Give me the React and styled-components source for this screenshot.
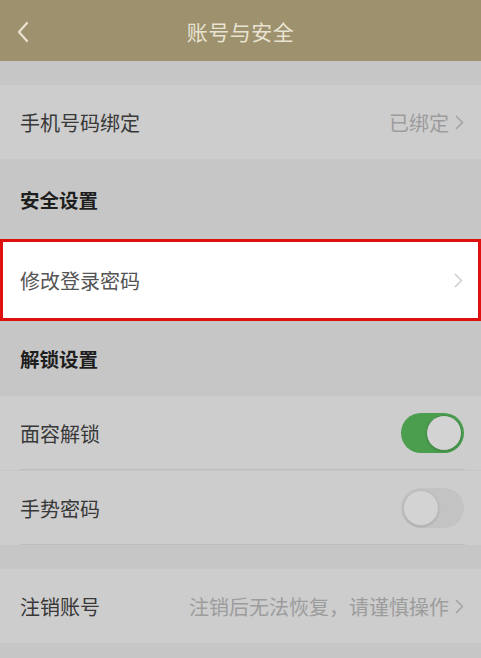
import styled, { createGlobalStyle } from "styled-components"

const GlobalStyle = createGlobalStyle`
    body {
        margin: 0;
        background: #c6c6c6;
        font-family: "Noto Sans CJK SC", "Noto Sans", sans-serif;
    }
`

function Chevron({ color = "#a8a8a8", size = 15 }) {
    return (
        <svg width={size * 0.6} height={size} viewBox="0 0 6 10">
            <path d="M1 1 L5 5 L1 9" fill="none" stroke={color} strokeWidth="1.1" strokeLinecap="round" strokeLinejoin="round" />
        </svg>
    )
}

function Toggle({ on }) {
    return (
        <Switch on={on}>
            <span />
        </Switch>
    )
}

export default function App() {
    return (
        <Page>
            <GlobalStyle />
            <Header>
                <BackButton>
                    <svg width="14" height="22" viewBox="0 0 14 22">
                        <path d="M11 2 L3 11 L11 20" fill="none" stroke="#e9e3d3" strokeWidth="2.2" strokeLinecap="round" strokeLinejoin="round" />
                    </svg>
                </BackButton>
                <Title>账号与安全</Title>
            </Header>

            <Spacer />
            <Row>
                <Label>手机号码绑定</Label>
                <Value>已绑定 <Chevron color="#a4a4a4" /></Value>
            </Row>

            <SectionTitle height={80}>安全设置</SectionTitle>
            <HighlightRow>
                <Label light>修改登录密码</Label>
                <Value><Chevron color="#cfcfcf" /></Value>
            </HighlightRow>

            <SectionTitle height={75}>解锁设置</SectionTitle>
            <Row divider>
                <Label>面容解锁</Label>
                <Toggle on />
            </Row>
            <Row divider>
                <Label>手势密码</Label>
                <Toggle />
            </Row>

            <Spacer />
            <Row>
                <Label>注销账号</Label>
                <Value>注销后无法恢复，请谨慎操作 <Chevron color="#a4a4a4" /></Value>
            </Row>
        </Page>
    )
}

const Page = styled.div`
    width: 481px;
    min-height: 658px;
    background: #c6c6c6;
    display: flex;
    flex-direction: column;
`
const Header = styled.div`
    height: 61px;
    background: #9e916d;
    display: flex;
    align-items: center;
    justify-content: center;
    position: relative;
`
const BackButton = styled.div`
    position: absolute;
    left: 16px;
    top: 21px;
    display: flex;
`
const Title = styled.div`
    font-size: 21px;
    color: #e9e3d3;
    letter-spacing: 0.5px;
`
const Spacer = styled.div`
    height: 24px;
`
const Row = styled.div`
    height: 74px;
    box-sizing: border-box;
    background: #cdcdcd;
    display: flex;
    align-items: center;
    justify-content: space-between;
    padding: 0 17px 0 20px;
    position: relative;
    ${props => props.divider && `
        &::after {
            content: "";
            position: absolute;
            left: 20px;
            right: 16px;
            bottom: 0;
            height: 1px;
            background: #bdbdbd;
        }
        & + & {
            margin-top: 1px;
        }
    `}
`
const HighlightRow = styled.div`
    height: 82px;
    box-sizing: border-box;
    background: #ffffff;
    border: 3px solid #df1010;
    display: flex;
    align-items: center;
    justify-content: space-between;
    padding: 0 15px 0 17px;
`
const Label = styled.div`
    font-size: 20px;
    color: ${props => props.light ? "#545454" : "#383838"};
`
const Value = styled.div`
    display: flex;
    align-items: center;
    gap: 6px;
    font-size: 20px;
    color: #9c9c9c;
`
const SectionTitle = styled.div`
    height: ${props => props.height}px;
    display: flex;
    align-items: center;
    padding: 0 20px;
    font-size: 19.5px;
    font-weight: bold;
    color: #1e1e1e;
`
const Switch = styled.div`
    width: 63px;
    height: 40px;
    box-sizing: border-box;
    border-radius: 20px;
    background: ${props => props.on ? "#4a9e4e" : "#c3c3c3"};
    position: relative;
    span {
        position: absolute;
        top: 2px;
        left: ${props => props.on ? "25px" : "2px"};
        width: 36px;
        height: 36px;
        border-radius: 50%;
        background: #d3d3d3;
        box-sizing: border-box;
        border: 1.5px solid ${props => props.on ? "#3f8a43" : "#bababa"};
        box-shadow: 0 1px 2px rgba(0, 0, 0, 0.12);
    }
`
